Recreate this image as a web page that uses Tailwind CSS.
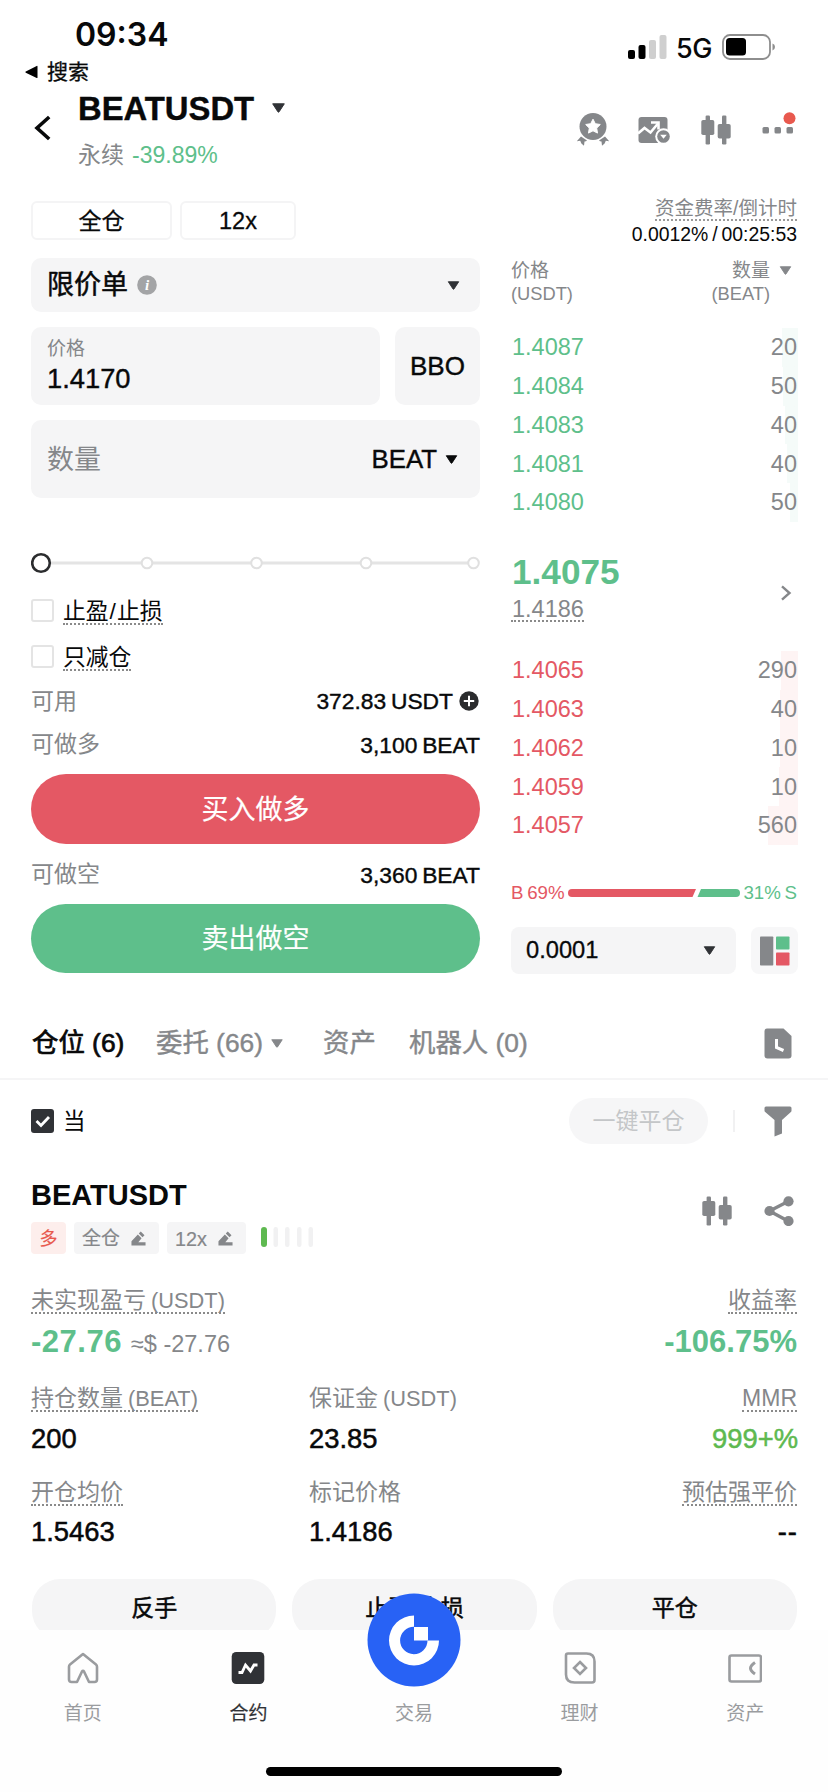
<!DOCTYPE html>
<html lang="zh-CN">
<head>
<meta charset="utf-8">
<meta name="viewport" content="width=device-width, initial-scale=1">
<title>BEATUSDT</title>
<script src="https://cdn.jsdelivr.net/npm/@tailwindcss/browser@4"></script>
</head>
<body class="bg-white">
<svg class="hidden">
  <symbol id="tri" viewBox="0 0 14 10"><path d="M1.2 0.8h11.6L7.6 8.8q-.6.7-1.2 0z" fill="currentColor" stroke="currentColor" stroke-width="1" stroke-linejoin="round"/></symbol>
  <symbol id="candles" viewBox="0 0 30 30"><g fill="currentColor"><rect x="4.6" y="0.5" width="4.4" height="29" rx="1.2"/><rect x="0.3" y="5" width="13" height="15" rx="1.8"/><rect x="21" y="0.5" width="4.4" height="29" rx="1.2"/><rect x="16.7" y="9" width="13" height="14.5" rx="1.8"/></g></symbol>
  <symbol id="pencil" viewBox="0 0 16 16"><g fill="currentColor"><path d="M0.500 15.500V11L7.300 3.600 11.300 7.600 7.800 12H15.500V15.500z"/><path d="M8.300 2.600 10.400 .4 14.400 4.400 12.300 6.600z"/></g></symbol>
</svg>
<div class="relative flex h-[1792px] w-[828px] flex-col overflow-hidden bg-white font-['Liberation_Sans','Noto_Sans_CJK_SC',sans-serif] whitespace-nowrap text-[#08090a]">

  <!-- status bar -->
  <div class="flex h-[92px] shrink-0 justify-between font-[Inter,'Noto_Sans_CJK_SC',sans-serif]">
    <div class="flex flex-col pt-[15px]">
      <div class="h-10 pl-[75px] text-[32px] leading-10 font-semibold">09:34</div>
      <div class="-mt-px flex h-9 items-center gap-[9px] pl-[25px]">
        <svg class="h-[14px] w-[13px]" viewBox="0 0 13 14"><path d="M12.500 1.500v11q0 .9-.8.500L.8 7.700q-.9-.700 0-1.300L11.700.900q.8-.3.8.6z" fill="#000"/></svg>
        <span class="text-[21px] leading-9 [-webkit-text-stroke:0.3px_currentColor]">搜索</span>
      </div>
    </div>
    <div class="flex h-[26px] items-center pr-[51px] mt-[34px]">
      <svg class="h-[26px] w-[39px]" viewBox="0 0 39 26"><rect x="0" y="16" width="7" height="9" rx="2"/><rect x="10.500" y="11" width="7" height="14" rx="2"/><rect x="21" y="6" width="7" height="19" rx="2" fill="#cfcfcf"/><rect x="31.500" y="1" width="7" height="24" rx="2" fill="#cfcfcf"/></svg>
      <span class="ml-[9px] w-[37px] pt-[2px] text-[27px] leading-none font-medium tracking-[-0.5px]">5G</span>
      <svg class="ml-[9px] h-[26px] w-[55px]" viewBox="0 0 55 26"><rect x="1" y="1" width="47" height="24" rx="7" fill="#fff" stroke="#8e8e8e" stroke-width="1.800"/><rect x="4" y="4" width="20" height="17.500" rx="3.500"/><path d="M50.500 9.500q2.500.8 2.500 3.500t-2.500 3.500z" fill="#8e8e8e"/></svg>
    </div>
  </div>

  <!-- instrument header -->
  <div class="flex h-[109px] shrink-0 justify-between pr-[32px] pl-[34px]">
    <div class="flex">
      <svg class="mt-[23px] h-[26px] w-[18px]" viewBox="0 0 18 26" fill="none" stroke="#08090a" stroke-width="3.600"><path d="M15.200 2 3 13l12.200 11"/></svg>
      <div class="ml-[26px] flex flex-col">
        <div class="flex h-8 items-center gap-[17px]">
          <span class="pt-px text-[32.800px] leading-8 font-bold [-webkit-text-stroke:0.4px_currentColor]">BEATUSDT</span>
          <svg class="h-[10px] w-[15px] text-[#303236]"><use href="#tri"/></svg>
        </div>
        <div class="mt-4 flex h-[30px] items-center gap-[8px] text-[23px] leading-[30px]"><span class="text-[#85878a]">永续</span><span class="text-[#5ebf8b]">-39.89%</span></div>
      </div>
    </div>
    <div class="flex text-[#85878a]">
      <svg class="mt-5 h-[34px] w-[34px]" viewBox="0 0 34 34"><circle cx="17" cy="14.500" r="13.500" fill="currentColor"/><path d="M17 7.200l2.300 4.500 5 .8-3.600 3.600.8 5-4.500-2.300-4.500 2.300.8-5-3.600-3.600 5-.8z" fill="#fff" stroke="#fff" stroke-width="1" stroke-linejoin="round"/><path d="M5 24.500l6 4-1 .8-1.500.2-.5 4.200-2.600-2.300-1.200-2.600-3.400.5zM29 24.500l-6 4 1 .8 1.500.2.500 4.200 2.600-2.300 1.200-2.600 3.400.5z" fill="currentColor"/></svg>
      <svg class="mt-[24px] ml-[28px] h-[28px] w-[33px]" viewBox="0 0 33 28"><rect x="0.500" y="1" width="29" height="26" rx="3" fill="currentColor"/><path d="M0 17.500 6.500 12l6 4.500 7.500-9" fill="none" stroke="#fff" stroke-width="2.600"/><path d="M13 6.500h7.500v7" fill="none" stroke="#fff" stroke-width="2.600"/><circle cx="25.500" cy="20.500" r="8.300" fill="#fff"/><circle cx="25.500" cy="20.500" r="6.300" fill="currentColor"/><path d="M22.200 18.800h6.600l-3.300 4z" fill="#fff"/></svg>
      <svg class="mt-[23px] ml-[30px] h-[30px] w-[30px]"><use href="#candles"/></svg>
      <svg class="mt-[19px] ml-[31px] h-[26px] w-[34px]" viewBox="0 0 34 26"><g fill="currentColor"><rect x="0.500" y="16" width="6.500" height="6.500" rx="1.500"/><rect x="12.500" y="16" width="6.500" height="6.500" rx="1.500"/><rect x="24.500" y="16" width="6.500" height="6.500" rx="1.500"/></g><circle cx="27.500" cy="7.300" r="6" fill="#e8594e"/></svg>
    </div>
  </div>

  <!-- order form and order book -->
  <div class="flex h-[772px] shrink-0 gap-[31px] pr-[30px] pl-[31px]">
    <div class="flex w-[449px] flex-col">
      <div class="flex h-[39px] gap-2 text-center leading-[36px]">
        <div class="w-[141px] rounded-md border-2 border-[#f4f4f5] text-[23px] [-webkit-text-stroke:0.3px_currentColor]">全仓</div>
        <div class="w-[116px] rounded-md border-2 border-[#f4f4f5] text-[23.500px] [-webkit-text-stroke:0.3px_currentColor]">12x</div>
      </div>
      <div class="mt-[18px] flex h-[54px] shrink-0 items-center rounded-[10px] bg-[#f5f5f6] px-4">
        <span class="text-[27px] leading-none [-webkit-text-stroke:0.5px_currentColor]">限价单</span>
        <svg class="ml-[9px] h-5 w-5" viewBox="0 0 20 20"><circle cx="10" cy="10" r="9.800" fill="#a3a4a6"/><text x="10.200" y="15" text-anchor="middle" fill="#fff" font-family="Liberation Serif, serif" font-size="15" font-style="italic" font-weight="700">i</text></svg>
        <svg class="mr-[4px] ml-auto h-[9px] w-[13px] text-[#303236]"><use href="#tri"/></svg>
      </div>
      <div class="mt-[15px] flex h-[78px] shrink-0 gap-[15px]">
        <div class="flex w-[349px] flex-col rounded-[10px] bg-[#f5f5f6] px-4 pt-[11px]">
          <span class="h-[22px] text-[19px] leading-[22px] text-[#85878a]">价格</span>
          <span class="mt-[4px] h-[30px] text-[27.300px] leading-[30px] [-webkit-text-stroke:0.4px_currentColor]">1.4170</span>
        </div>
        <div class="flex w-[85px] items-center justify-center rounded-[10px] bg-[#f5f5f6] text-[26px] [-webkit-text-stroke:0.4px_currentColor]">BBO</div>
      </div>
      <div class="mt-[15px] flex h-[78px] shrink-0 items-center rounded-[10px] bg-[#f5f5f6] px-4 leading-none">
        <span class="pt-[2px] text-[27px] text-[#85878a]">数量</span>
        <span class="ml-auto pt-px text-[25.800px] [-webkit-text-stroke:0.4px_currentColor]">BEAT</span>
        <svg class="mr-[6px] ml-[8px] h-[9px] w-[13px]"><use href="#tri"/></svg>
      </div>
      <svg class="mt-[54px] h-[22px] w-[449px] shrink-0" viewBox="0 0 449 22"><path d="M20 11h418" stroke="#e4e4e4" stroke-width="3"/><g fill="#fff" stroke="#e0e0e0" stroke-width="2"><circle cx="116" cy="11" r="5.300"/><circle cx="225.500" cy="11" r="5.300"/><circle cx="335" cy="11" r="5.300"/><circle cx="442.500" cy="11" r="5.300"/></g><circle cx="10" cy="11" r="8.800" fill="#fff" stroke="#2b2c2e" stroke-width="2.600"/></svg>
      <div class="mt-[25px] flex h-[26px] shrink-0 gap-[9px]">
        <div class="h-[23px] w-[23px] rounded-[3px] border-2 border-[#e4e4e4]"></div>
        <span class="h-[26px] border-b-2 border-dotted border-[#8a8a8a] text-[22.800px] leading-[24px]">止盈<span class="px-[1px]">/</span>止损</span>
      </div>
      <div class="mt-[20px] flex h-[26px] shrink-0 gap-[9px]">
        <div class="h-[23px] w-[23px] rounded-[3px] border-2 border-[#e4e4e4]"></div>
        <span class="h-[26px] border-b-2 border-dotted border-[#8a8a8a] text-[22.800px] leading-[24px]">只减仓</span>
      </div>
      <div class="mt-[15px] flex h-[30px] shrink-0 items-center leading-none">
        <span class="pt-px text-[23px] text-[#85878a]">可用</span>
        <span class="ml-auto pt-px text-[22.800px] [word-spacing:-1.500px] [-webkit-text-stroke:0.4px_currentColor]">372.83 USDT</span>
        <svg class="mr-[1px] ml-[6px] h-5 w-5" viewBox="0 0 20 20"><circle cx="10" cy="10" r="9.700" fill="#2b2c2e"/><path d="M10 4.800v10.400M4.800 10h10.400" stroke="#fff" stroke-width="2"/></svg>
      </div>
      <div class="mt-[13px] flex h-[30px] shrink-0 items-center justify-between leading-none">
        <span class="pt-px text-[23px] text-[#85878a]">可做多</span>
        <span class="pt-[2px] text-[22.800px] [word-spacing:-1.500px] [-webkit-text-stroke:0.4px_currentColor]">3,100 BEAT</span>
      </div>
      <div class="mt-[15px] flex h-[70px] shrink-0 items-center justify-center rounded-full bg-[#e45864] pt-[2px] text-[27px] text-white [-webkit-text-stroke:0.2px_currentColor]">买入做多</div>
      <div class="mt-[15px] flex h-[30px] shrink-0 items-center justify-between leading-none">
        <span class="pt-px text-[23px] text-[#85878a]">可做空</span>
        <span class="pt-[2px] text-[22.800px] [word-spacing:-1.500px] [-webkit-text-stroke:0.4px_currentColor]">3,360 BEAT</span>
      </div>
      <div class="mt-[15px] flex h-[69px] shrink-0 items-center justify-center rounded-full bg-[#5ebf8b] pt-[2px] text-[27px] text-white [-webkit-text-stroke:0.2px_currentColor]">卖出做空</div>
    </div>

    <div class="-mt-[4px] flex w-[287px] flex-col text-[#85878a]">
      <div class="flex h-[24px] shrink-0 justify-end pr-px"><span class="border-b-2 border-dotted border-[#9a9a9a] text-[19.500px] leading-[22px]">资金费率/倒计时</span></div>
      <div class="mt-[2px] h-[21px] shrink-0 pr-px text-right text-[19.400px] leading-[22px] [word-spacing:-1.500px] text-[#08090a]">0.0012% / 00:25:53</div>
      <div class="mt-[15px] flex h-[46px] shrink-0 justify-between text-[18.300px] leading-[23px]">
        <div><div class="text-[19px]">价格</div><div>(USDT)</div></div>
        <div class="flex gap-[9px] pr-[6px]">
          <div class="text-right"><div class="text-[19px]">数量</div><div>(BEAT)</div></div>
          <svg class="mt-[7px] h-[9px] w-[13px]"><use href="#tri"/></svg>
        </div>
      </div>
      <div class="mt-[23px] grid h-[194px] shrink-0 grid-rows-5 text-[23.500px]">
        <div class="flex items-center justify-between bg-linear-to-r from-transparent from-[271px] to-[#f5fbf9] to-[271px] pt-px pr-px pl-px"><span class="text-[#5ebf8b]">1.4087</span><span>20</span></div>
        <div class="flex items-center justify-between bg-linear-to-r from-transparent from-[272px] to-[#f5fbf9] to-[272px] pt-px pr-px pl-px"><span class="text-[#5ebf8b]">1.4084</span><span>50</span></div>
        <div class="flex items-center justify-between bg-linear-to-r from-transparent from-[274px] to-[#f5fbf9] to-[274px] pt-px pr-px pl-px"><span class="text-[#5ebf8b]">1.4083</span><span>40</span></div>
        <div class="flex items-center justify-between bg-linear-to-r from-transparent from-[276px] to-[#f5fbf9] to-[276px] pt-px pr-px pl-px"><span class="text-[#5ebf8b]">1.4081</span><span>40</span></div>
        <div class="flex items-center justify-between bg-linear-to-r from-transparent from-[279px] to-[#f5fbf9] to-[279px] pt-px pr-px pl-px"><span class="text-[#5ebf8b]">1.4080</span><span>50</span></div>
      </div>
      <div class="mt-[32px] flex h-[68px] shrink-0 items-center justify-between">
        <div class="flex flex-col items-start">
          <span class="h-[36px] pl-px text-[35.200px] leading-[36px] font-bold text-[#5ebf8b]">1.4075</span>
          <span class="mt-[8px] h-[24px] border-b-2 border-dotted border-[#8a8a8a] pl-px text-[23.500px] leading-[22px]">1.4186</span>
        </div>
        <svg class="mt-[9px] mr-[6px] h-[16px] w-[12px]" viewBox="0 0 12 16" fill="none" stroke="currentColor" stroke-width="2.400"><path d="M2 1.300 9.500 8 2 14.700"/></svg>
      </div>
      <div class="mt-[29px] grid h-[194px] shrink-0 grid-rows-5 text-[23.500px]">
        <div class="flex items-center justify-between bg-linear-to-r from-transparent from-[270px] to-[#fef4f4] to-[270px] pt-px pr-px pl-px"><span class="text-[#e45864]">1.4065</span><span>290</span></div>
        <div class="flex items-center justify-between bg-linear-to-r from-transparent from-[269px] to-[#fef4f4] to-[269px] pt-px pr-px pl-px"><span class="text-[#e45864]">1.4063</span><span>40</span></div>
        <div class="flex items-center justify-between bg-linear-to-r from-transparent from-[269px] to-[#fef4f4] to-[269px] pt-px pr-px pl-px"><span class="text-[#e45864]">1.4062</span><span>10</span></div>
        <div class="flex items-center justify-between bg-linear-to-r from-transparent from-[268px] to-[#fef4f4] to-[268px] pt-px pr-px pl-px"><span class="text-[#e45864]">1.4059</span><span>10</span></div>
        <div class="flex items-center justify-between bg-linear-to-r from-transparent from-[257px] to-[#fef4f4] to-[257px] pt-px pr-px pl-px"><span class="text-[#e45864]">1.4057</span><span>560</span></div>
      </div>
      <div class="mt-[38px] flex h-[20px] shrink-0 items-center justify-between pr-px text-[18.700px] leading-none [word-spacing:-1.500px]">
        <span class="text-[#e45864]">B 69%</span>
        <svg class="h-[8px] w-[172px]" viewBox="0 0 172 8"><path d="M4 0h124l-3.500 8H4a4 4 0 0 1 0-8z" fill="#e45864"/><path d="M133 0h35a4 4 0 0 1 0 8h-38.500z" fill="#5ebf8b"/></svg>
        <span class="text-[#5ebf8b]">31% S</span>
      </div>
      <div class="mt-[24px] flex h-[47px] shrink-0 justify-between">
        <div class="flex w-[225px] items-center justify-between rounded-lg bg-[#f5f5f6] pr-[20px] pl-[15px] text-[23.700px] text-[#08090a] [-webkit-text-stroke:0.3px_currentColor]">0.0001<svg class="h-[9px] w-[13px] text-[#303236]"><use href="#tri"/></svg></div>
        <div class="flex w-[47px] items-center justify-center rounded-lg bg-[#f7f7f8]">
          <svg class="h-[30px] w-[30px]" viewBox="0 0 30 30"><rect x="0" y="0.500" width="13.300" height="29" rx=".8" fill="#85878a"/><rect x="16" y="0.500" width="13.500" height="13" rx=".8" fill="#5ebf8b"/><rect x="16" y="16.500" width="13.500" height="13" rx=".8" fill="#e45864"/></svg>
        </div>
      </div>
    </div>
  </div>

  <!-- tabs -->
  <div class="mt-[35px] flex h-[72px] shrink-0 items-center border-b-2 border-[#f5f5f6] pr-[36px] pl-[32px] text-[26.400px] leading-none text-[#85878a] [-webkit-text-stroke:0.4px_currentColor]">
    <span class="w-[124px] text-[#08090a] [-webkit-text-stroke:0.7px_currentColor]">仓位 (6)</span>
    <span class="w-[108px]">委托 (66)</span>
    <svg class="ml-[6px] h-[9px] w-[14px]"><use href="#tri"/></svg>
    <span class="ml-[39px] w-[86px]">资产</span>
    <span>机器人 (0)</span>
    <svg class="ml-auto h-[31px] w-[28px]" viewBox="0 0 28 31"><path d="M3 .5h16.500L27.500 8v19.500q0 3-3 3h-21q-3 0-3-3V3.500q0-3 2.500-3z" fill="currentColor"/><path d="M12.500 11v8.500l7 3" fill="none" stroke="#fff" stroke-width="3"/></svg>
  </div>

  <!-- filter row -->
  <div class="mt-[18px] flex h-[46px] shrink-0 items-center pr-[36px] pl-[31px]">
    <svg class="h-[24px] w-[23px]" viewBox="0 0 23 24"><rect width="23" height="24" rx="3" fill="#303236"/><path d="M5.500 12l4.500 4.500 8-8.500" fill="none" stroke="#fff" stroke-width="2.800"/></svg>
    <span class="ml-[9px] w-[22px] overflow-hidden pt-px text-[22.500px] leading-[30px]">当</span>
    <div class="ml-auto flex h-[46px] w-[139px] items-center justify-center rounded-full bg-[#f6f6f7] pt-px text-[23px] text-[#c4c6c8]">一键平仓</div>
    <div class="ml-[25px] h-[22px] w-[2px] bg-[#f1f1f2]"></div>
    <svg class="ml-[29px] h-[31px] w-[28px] text-[#85878a]" viewBox="0 0 28 31"><path d="M2 .5h24q1.500 0 1.500 1.500v2.500q0 1-.6 1.600L18 14v13.500L10.500 30.500V14L1.200 6.100Q.5 5.500.5 4.500V2Q.5.500 2 .5z" fill="currentColor"/></svg>
  </div>

  <!-- position card -->
  <div class="mt-[33px] flex h-[78px] shrink-0 justify-between pr-[34px] pl-[31px]">
    <div>
      <div class="h-[36px] text-[29px] leading-[36px] font-bold">BEATUSDT</div>
      <div class="mt-[9px] flex h-[32px] leading-[34px] text-[#85878a] [-webkit-text-stroke:0.2px_currentColor]">
        <div class="flex w-[35px] items-center justify-center rounded bg-[#fdeeec] pt-px text-[18px] text-[#e8594e]">多</div>
        <div class="ml-[8px] flex w-[85px] items-center justify-between rounded bg-[#f5f5f6] pt-px pr-[13px] pl-[8px] text-[19px]">全仓<svg class="h-[15px] w-[15px]"><use href="#pencil"/></svg></div>
        <div class="ml-[8px] flex w-[79px] items-center justify-between rounded bg-[#f5f5f6] pt-px pr-[13px] pl-[8px] text-[19.800px]">12x<svg class="h-[15px] w-[15px]"><use href="#pencil"/></svg></div>
        <svg class="mt-[5px] ml-[15px] h-[21px] w-[54px]" viewBox="0 0 54 21"><rect x="0" y="0" width="6" height="20" rx="3" fill="#5eb950"/><g fill="#f1f1f2"><rect x="12.500" width="4.500" height="20" rx="2.200"/><rect x="24" width="4.500" height="20" rx="2.200"/><rect x="36" width="4.500" height="20" rx="2.200"/><rect x="47.500" width="4.500" height="20" rx="2.200"/></g></svg>
      </div>
    </div>
    <div class="flex pt-[19px] text-[#85878a]">
      <svg class="h-[30px] w-[30px]"><use href="#candles"/></svg>
      <svg class="ml-[32px] h-[30px] w-[30px]" viewBox="0 0 30 30"><path d="M24 5.500 5.500 15 24 25" fill="none" stroke="currentColor" stroke-width="3.400"/><g fill="currentColor"><circle cx="24.500" cy="5.300" r="5.100"/><circle cx="5.500" cy="15" r="5.100"/><circle cx="24.500" cy="25" r="5.100"/></g></svg>
    </div>
  </div>

  <div class="mt-[34px] flex h-[25px] shrink-0 justify-between pr-[31px] pl-[31px] text-[23px] leading-[23px] text-[#85878a]">
    <span class="border-b-2 border-dotted border-[#8a8a8a]">未实现盈亏<span class="text-[21.800px] [word-spacing:-1px]"> (USDT)</span></span>
    <span class="border-b-2 border-dotted border-[#8a8a8a]">收益率</span>
  </div>
  <div class="mt-[11px] flex h-[34px] shrink-0 items-baseline pr-[31px] pl-[31px] text-[31px] leading-[34px] font-bold text-[#5ebf8b]">
    <span class="tracking-[0.5px]">-27.76</span>
    <span class="ml-[9px] text-[23.500px] font-normal text-[#85878a]">≈$ -27.76</span>
    <span class="ml-auto">-106.75%</span>
  </div>

  <div class="mt-[28px] grid h-[163px] shrink-0 grid-cols-[278px_1fr_auto] grid-rows-[25px_34px_25px_34px] content-start pr-[30px] pl-[31px] text-[23px] leading-[23px] text-[#85878a]">
    <div class="flex"><span class="border-b-2 border-dotted border-[#8a8a8a]">持仓数量<span class="text-[21.800px] [word-spacing:-1px]"> (BEAT)</span></span></div>
    <div>保证金<span class="text-[21.800px] [word-spacing:-1px]"> (USDT)</span></div>
    <div class="flex justify-end pr-px"><span class="border-b-2 border-dotted border-[#8a8a8a]">MMR</span></div>
    <div class="pt-[15px] text-[27.400px] text-[#08090a] [-webkit-text-stroke:0.5px_currentColor]">200</div>
    <div class="pt-[15px] text-[27.400px] text-[#08090a] [-webkit-text-stroke:0.5px_currentColor]">23.85</div>
    <div class="pt-[15px] text-right text-[27.400px] text-[#5eb950] [-webkit-text-stroke:0.5px_currentColor]">999+%</div>
    <div class="mt-[34px] flex"><span class="h-[26px] border-b-2 border-dotted border-[#8a8a8a] leading-[24px]">开仓均价</span></div>
    <div class="mt-[34px] leading-[24px]">标记价格</div>
    <div class="mt-[34px] flex justify-end pr-px"><span class="h-[26px] border-b-2 border-dotted border-[#8a8a8a] leading-[24px]">预估强平价</span></div>
    <div class="pt-[49px] text-[27.400px] text-[#08090a] [-webkit-text-stroke:0.5px_currentColor]">1.5463</div>
    <div class="pt-[49px] text-[27.400px] text-[#08090a] [-webkit-text-stroke:0.5px_currentColor]">1.4186</div>
    <div class="pt-[49px] text-right text-[27.400px] tracking-[1px] text-[#08090a] [-webkit-text-stroke:0.5px_currentColor]">--</div>
  </div>

  <div class="mt-[29px] grid h-[51px] shrink-0 grid-cols-3 gap-[16px] overflow-hidden pr-[31px] pl-[32px] text-center text-[23px] leading-[58px] [-webkit-text-stroke:0.5px_currentColor]">
    <div class="h-[60px] rounded-[28px] bg-[#f5f5f6]">反手</div>
    <div class="h-[60px] rounded-[28px] bg-[#f5f5f6]">止盈/止损</div>
    <div class="h-[60px] rounded-[28px] bg-[#f5f5f6]">平仓</div>
  </div>

  <!-- bottom navigation -->
  <div class="relative flex flex-1 flex-col items-center bg-[#fefefe]">
    <div class="grid w-full grid-cols-5 pt-[21px] text-center text-[19px] leading-[24px] text-[#9a9c9f]">
      <div class="flex flex-col items-center"><svg class="h-[34px] w-[34px]" viewBox="0 0 34 34" fill="none" stroke="currentColor" stroke-width="2.600" stroke-linejoin="round"><path d="M17 3 30 13.400q1 .8 1 2.300V28.500q0 2.500-2.500 2.500h-5.500L18 20.500q-1-1.600-2 0L11 31H5.500Q3 31 3 28.500V15.700q0-1.500 1-2.300z"/></svg><span class="mt-[17px]">首页</span></div>
      <div class="flex flex-col items-center text-[#303236]"><svg class="h-[34px] w-[34px]" viewBox="0 0 34 34"><rect x=".7" y="1" width="32.600" height="32" rx="4.500" fill="currentColor"/><path d="M7.500 21.500h3.500l3.500-7.500 5 6 3.500-6h3.500" fill="none" stroke="#fff" stroke-width="2.800"/></svg><span class="mt-[17px] [-webkit-text-stroke:0.2px_currentColor]">合约</span></div>
      <div class="pt-[51px]">交易</div>
      <div class="flex flex-col items-center"><svg class="h-[34px] w-[34px]" viewBox="0 0 34 34" fill="none" stroke="currentColor" stroke-width="2.600"><path d="M5 2.500h18.500q8 0 8 8V29q0 2.500-2.500 2.500H11.500q-8.500 0-8.500-8V4.500q0-2 2-2z"/><path d="M17 11l6 6-6 6-6-6z"/></svg><span class="mt-[17px]">理财</span></div>
      <div class="flex flex-col items-center"><svg class="h-[34px] w-[34px]" viewBox="0 0 34 34" fill="none" stroke="currentColor" stroke-width="2.600"><rect x="1.500" y="4.500" width="31.500" height="26" rx="2"/><path d="M27 11.500q-4.500 3-4.500 5.800T27 23" stroke-width="3"/></svg><span class="mt-[17px]">资产</span></div>
    </div>
    <div class="mt-auto mb-[16px] h-[9px] w-[296px] rounded-full bg-black"></div>
    <svg class="absolute -top-[37px] left-[367px] h-[94px] w-[94px]" viewBox="0 0 94 94"><circle cx="47" cy="47" r="46.500" fill="#2862f5"/><path d="M47 22.500a25 25 0 1 0 25 25H60.500a13.700 13.700 0 1 1-13.500-13.700z" fill="#fff"/><rect x="47" y="34" width="14" height="13.500" fill="#fff"/></svg>
  </div>
</div>
</body>
</html>
